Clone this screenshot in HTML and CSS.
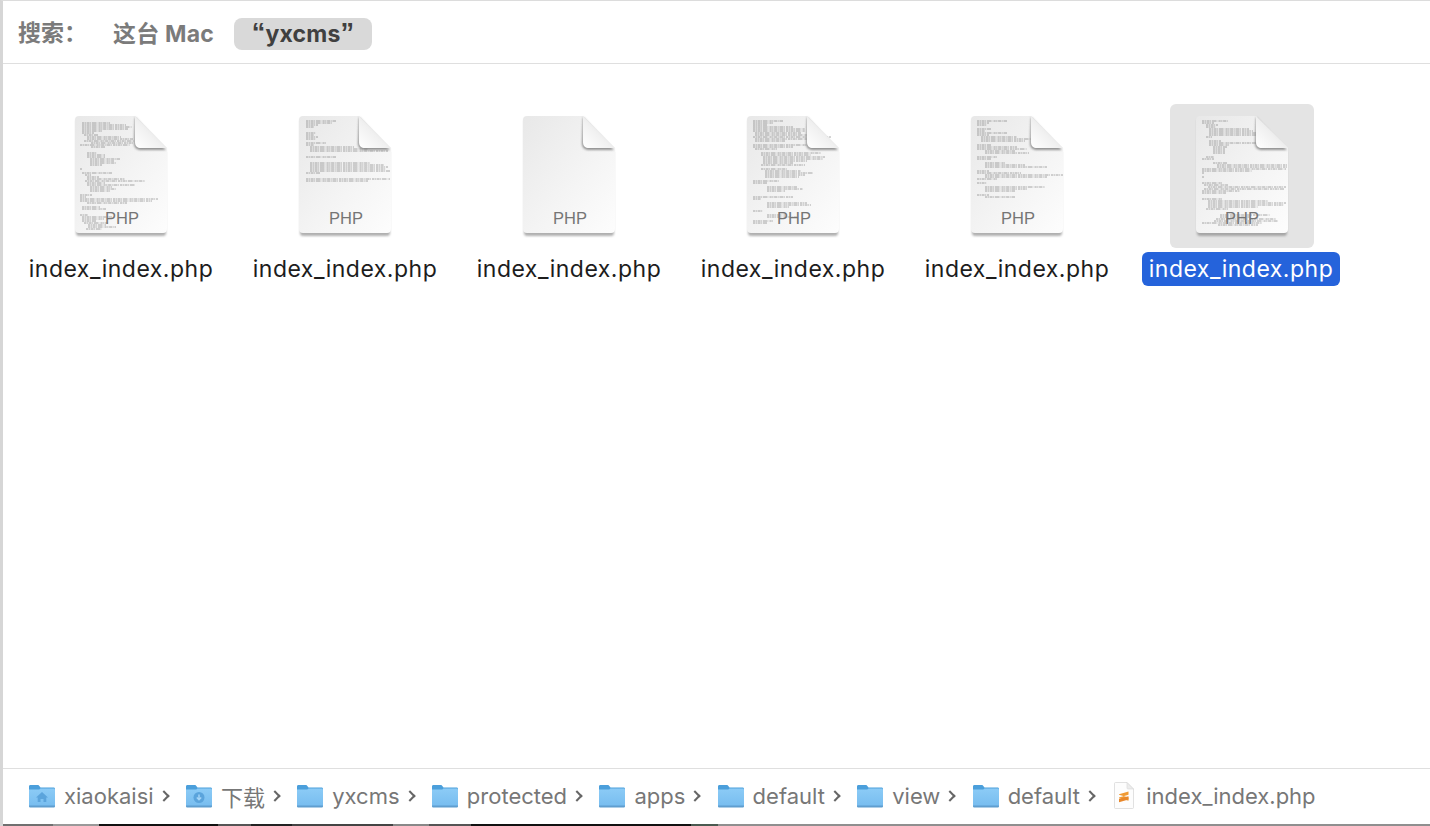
FILE: index.html
```html
<!DOCTYPE html>
<html lang="zh">
<head>
<meta charset="utf-8">
<title>搜索 yxcms</title>
<link rel="stylesheet" href="styles.css">
</head>
<body>
<svg class="defs" width="0" height="0" aria-hidden="true">
  <defs>
    <linearGradient id="paper" x1="0" y1="0" x2="1" y2="1">
      <stop offset="0" stop-color="#e8e8e8"/>
      <stop offset=".55" stop-color="#f4f4f4"/>
      <stop offset="1" stop-color="#fdfdfd"/>
    </linearGradient>
    <linearGradient id="fold" x1="0" y1="1" x2="1" y2="0">
      <stop offset="0" stop-color="#ffffff"/>
      <stop offset=".45" stop-color="#f0f0f0"/>
      <stop offset="1" stop-color="#c8c8c8"/>
    </linearGradient>
    <linearGradient id="blue" x1="0" y1="0" x2="0" y2="1">
      <stop offset="0" stop-color="#8ccbf6"/>
      <stop offset="1" stop-color="#76bcef"/>
    </linearGradient>
    <filter id="soft" x="-10%" y="-10%" width="120%" height="120%">
      <feGaussianBlur stdDeviation="1.100"/>
    </filter>
    <filter id="inkblur" x="-5%" y="-5%" width="110%" height="110%">
      <feGaussianBlur stdDeviation=".3"/>
    </filter>
    <symbol id="doc" viewBox="0 0 144 144">
      <g transform="translate(26 12)">
        <path class="doc-shadow" d="M4 3h55l32 33v81a3 3 0 0 1-3 3H4a3 3 0 0 1-3-3V6a3 3 0 0 1 3-3z"/>
        <path fill="url(#paper)" d="M4 0h56l32 32v81a4 4 0 0 1-4 4H4a4 4 0 0 1-4-4V4a4 4 0 0 1 4-4z"/>
      </g>
    </symbol>
    <symbol id="corner" viewBox="0 0 144 144">
      <g transform="translate(26 12)">
        <path class="fold-shadow" d="M60 1l31 33H66c-4 0-7-2-7-7z"/>
        <path fill="url(#fold)" d="M60 0l32 32H66c-4 0-6-2-6-6z"/>
      </g>
    </symbol>
    <symbol id="folder" viewBox="0 0 26 24">
      <path fill="#4b9fdb" d="M0 2.500C0 1.500.6 1 1.500 1h7c1 0 1.500.4 2 1.200L11.500 3.500H24.500c1 0 1.500.6 1.500 1.500v3H0z"/>
      <path fill="url(#blue)" d="M0 5.500h9.500c1 0 1.500-.5 2-1h13c1 0 1.500.6 1.500 1.500V21.500c0 1-.6 1.500-1.500 1.500h-23C.6 23 0 22.500 0 21.500z"/>
      <path fill="#5f9ecf" d="M0 21.500h26v.5c0 1-.6 1.500-1.500 1.500h-23C.6 23.500 0 23 0 22z"/>
    </symbol>
    <symbol id="scode" viewBox="0 0 20 27">
      <path fill="#fdfdfd" stroke="#d9d9d9" stroke-width=".8" d="M1.500.5H13L19.500 7V25.500a1 1 0 0 1-1 1H1.500a1 1 0 0 1-1-1V1.500a1 1 0 0 1 1-1z"/>
      <path fill="#ececec" stroke="#d9d9d9" stroke-width=".6" d="M13 .5V6a1 1 0 0 0 1 1h5.500z"/>
      <path fill="#f09a33" d="M5 12.200 14.500 9.500v3.300L5 15.500zM5 16l9.500 2.700v-3.300L5 12.700z"/>
      <path fill="#e8872a" d="M5 16.800 14.500 14.200v3.400L5 20.300z"/>
    </symbol>
  </defs>
</svg>

<div class="window">
  <header class="search">
    <span class="search-label">搜索：</span>
    <span class="scope">这台 Mac</span>
    <span class="scope scope-on"><span class="quote">“</span>yxcms<span class="quote">”</span></span>
  </header>

  <main class="files">
    <div class="file">
      <svg class="thumb" viewBox="0 0 144 144">
        <use href="#doc" width="144" height="144"/>
        <g transform="translate(26 12)">
          <path class="code" d="M7 7h28M7 9h44M7 11h50M7 13h46M7 15h20M7 17h12M9 19h14M12 21h34M12 23h46M9 25h50M16 27h42M5 29h50M16 31h14M12 37h10M12 39h18M12 41h18M15 43h30M15 45h24M15 47h26M15 49h12M5 53h2M7 57h30M10 59h6M12 61h12M12 63h38M10 65h60M12 67h18M12 69h48M15 71h22M15 73h26M15 75h20M5 79h12M5 81h6M5 83h78M5 85h72M12 87h40M7 91h18M7 93h24M5 99h8M7 101h30M7 103h22M7 105h14M9 107h24M13 109h18M13 111h28M11 113h16"/>
        </g>
        <use href="#corner" width="144" height="144"/>
        <text class="doc-ext" x="73" y="120">PHP</text>
      </svg>
      <span class="name">index_index.php</span>
    </div>
    <div class="file">
      <svg class="thumb" viewBox="0 0 144 144">
        <use href="#doc" width="144" height="144"/>
        <g transform="translate(26 12)">
          <path class="code" d="M7 5h30M7 7h26M7 9h12M7 11h8M7 17h10M7 19h8M7 21h12M7 23h10M7 27h20M7 29h8M11 31h44M11 33h58M11 35h78M7 41h30M11 47h60M11 49h74M11 51h78M11 53h76M11 55h80M7 57h14M7 63h84M7 65h62"/>
        </g>
        <use href="#corner" width="144" height="144"/>
        <text class="doc-ext" x="73" y="120">PHP</text>
      </svg>
      <span class="name">index_index.php</span>
    </div>
    <div class="file">
      <svg class="thumb" viewBox="0 0 144 144">
        <use href="#doc" width="144" height="144"/>
        <use href="#corner" width="144" height="144"/>
        <text class="doc-ext" x="73" y="120">PHP</text>
      </svg>
      <span class="name">index_index.php</span>
    </div>
    <div class="file">
      <svg class="thumb" viewBox="0 0 144 144">
        <use href="#doc" width="144" height="144"/>
        <g transform="translate(26 12)">
          <path class="code" d="M6 5h30M6 7h20M6 9h14M6 11h40M6 13h52M6 15h52M8 17h46M8 19h52M6 21h78M8 23h60M8 25h30M6 29h60M6 31h40M8 33h22M14 37h60M14 39h50M16 41h62M16 43h60M16 45h44M16 47h30M14 49h44M14 53h26M18 55h36M18 57h48M18 59h40M18 61h34M6 65h26M6 67h14M20 71h30M20 73h36M20 75h18M6 81h40M6 83h8M20 87h40M20 89h44M20 91h22M6 95h10M20 99h20M20 101h30M6 105h20M6 107h14"/>
        </g>
        <use href="#corner" width="144" height="144"/>
        <text class="doc-ext" x="73" y="120">PHP</text>
      </svg>
      <span class="name">index_index.php</span>
    </div>
    <div class="file">
      <svg class="thumb" viewBox="0 0 144 144">
        <use href="#doc" width="144" height="144"/>
        <g transform="translate(26 12)">
          <path class="code" d="M6 5h30M6 7h12M6 9h10M6 13h14M6 15h8M6 17h30M6 19h12M10 21h36M10 23h50M10 25h44M6 29h14M6 31h40M6 33h50M14 35h30M14 37h44M6 41h20M6 43h14M14 47h20M14 49h40M14 51h62M6 55h12M6 57h44M14 59h78M14 61h62M6 63h20M6 67h10M14 71h60M14 73h42M14 75h30M6 79h12M14 81h30"/>
        </g>
        <use href="#corner" width="144" height="144"/>
        <text class="doc-ext" x="73" y="120">PHP</text>
      </svg>
      <span class="name">index_index.php</span>
    </div>
    <div class="file file-on">
      <svg class="thumb" viewBox="0 0 144 144">
        <use href="#doc" width="144" height="144"/>
        <g transform="translate(26 12)">
          <path class="code" d="M6 5h26M6 7h12M10 9h12M10 11h10M13 13h40M13 15h44M13 17h48M13 19h50M10 21h6M13 25h12M13 27h50M13 29h20M17 31h14M17 33h12M17 35h12M17 37h12M10 41h8M6 43h12M17 47h14M21 49h70M21 51h70M6 53h84M6 55h50M6 57h2M6 61h2M6 67h20M8 69h24M12 71h78M8 73h80M6 75h38M6 77h24M6 83h20M12 85h60M12 87h78M12 89h76M12 91h50M10 93h22M24 99h50M24 101h30M20 103h60M18 105h64M6 107h60M22 109h40"/>
        </g>
        <use href="#corner" width="144" height="144"/>
        <text class="doc-ext" x="72" y="120">PHP</text>
      </svg>
      <span class="name">index_index.php</span>
    </div>
  </main>

  <footer class="path">
    <span class="crumb">
      <svg class="ico" viewBox="0 0 26 24"><use href="#folder" width="26" height="24"/><path class="glyph" d="M13 8l6 5.500h-1.700V18h-2.800v-3h-3v3H8.700v-4.500H7z"/></svg>
      <span>xiaokaisi</span>
    </span>
    <span class="sep"></span>
    <span class="crumb">
      <svg class="ico" viewBox="0 0 26 24"><use href="#folder" width="26" height="24"/><circle class="glyph" cx="13" cy="13.500" r="5.500"/><path class="glyph-cut" d="M13 10.500v5M10.800 13.500l2.200 2.200 2.200-2.200"/></svg>
      <span>下载</span>
    </span>
    <span class="sep"></span>
    <span class="crumb"><svg class="ico" viewBox="0 0 26 24"><use href="#folder" width="26" height="24"/></svg><span>yxcms</span></span>
    <span class="sep"></span>
    <span class="crumb"><svg class="ico" viewBox="0 0 26 24"><use href="#folder" width="26" height="24"/></svg><span>protected</span></span>
    <span class="sep"></span>
    <span class="crumb"><svg class="ico" viewBox="0 0 26 24"><use href="#folder" width="26" height="24"/></svg><span>apps</span></span>
    <span class="sep"></span>
    <span class="crumb"><svg class="ico" viewBox="0 0 26 24"><use href="#folder" width="26" height="24"/></svg><span>default</span></span>
    <span class="sep"></span>
    <span class="crumb"><svg class="ico" viewBox="0 0 26 24"><use href="#folder" width="26" height="24"/></svg><span>view</span></span>
    <span class="sep"></span>
    <span class="crumb"><svg class="ico" viewBox="0 0 26 24"><use href="#folder" width="26" height="24"/></svg><span>default</span></span>
    <span class="sep"></span>
    <span class="crumb crumb-file"><svg class="ico-file" viewBox="0 0 20 27"><use href="#scode" width="20" height="27"/></svg><span>index_index.php</span></span>
  </footer>
  <div class="desktop"></div>
</div>
</body>
</html>
```

FILE: styles.css
```css
* { box-sizing: border-box; }
html, body { margin: 0; height: 100%; background: #fff; overflow: hidden; }
body { font-family: Inter, "Noto Sans CJK SC", "Liberation Sans", sans-serif; }
.defs { display: block; height: 0; width: 0; }

.window {
  display: flex;
  flex-direction: column;
  height: 826px;
  border-left: 3px solid #d6d6d6;
  border-top: 1px solid #dcdcdc;
  background: #fff;
}

.search {
  display: flex;
  align-items: center;
  height: 63px;
  flex: none;
  padding: 4px 0 0 15px;
  border-bottom: 1px solid #dfdfdf;
  font-size: 23px;
  font-weight: 700;
  letter-spacing: .2px;
  color: #7b7b7b;
}
.search-label { width: 95px; margin-bottom: 6px; letter-spacing: 0; }
.scope { white-space: nowrap; margin-bottom: 5px; }
.scope-on {
  display: flex;
  align-items: center;
  justify-content: center;
  width: 138px;
  height: 32px;
  margin: 0 0 0 20px;
  padding-bottom: 1px;
  border-radius: 8px;
  background: #d9d9d9;
  color: #404040;
}
.quote { font-family: "Liberation Sans", Arial, sans-serif; font-size: 27px; line-height: 1; }

.files {
  flex: 1;
  display: grid;
  grid-template-columns: repeat(6, 224px);
  align-content: start;
  padding: 40px 0 0 6px;
}
.file {
  display: flex;
  flex-direction: column;
  align-items: center;
}
.thumb { display: block; width: 144px; height: 144px; border-radius: 6px; }
.file-on .thumb { background: #e4e4e4; margin-left: 2px; }
.name {
  margin-top: 4px;
  height: 34px;
  padding: 0 7px;
  border-radius: 6px;
  font-size: 23px;
  letter-spacing: .5px;
  line-height: 35px;
  color: #1d1d1d;
  white-space: nowrap;
}
.file-on .name { background: #2563db; color: #fff; }

.doc-shadow { fill: #7d7d7d; opacity: .6; filter: url(#soft); }
.fold-shadow { fill: #808080; opacity: .85; filter: url(#soft); }
.code {
  fill: none;
  stroke: #6c6c6c;
  stroke-width: .8;
  stroke-dasharray: 2.200 .5 1.200 .7 3 .6 1 .8 4 .5 .8 1.200;
  opacity: .72;
  filter: url(#inkblur);
}
.doc-ext {
  font-family: "Liberation Sans", Arial, sans-serif;
  font-size: 16.500px;
  fill: #757575;
  text-anchor: middle;
}

.path {
  display: flex;
  align-items: center;
  flex: none;
  height: 56px;
  padding: 0 0 2px 26px;
  border-top: 1px solid #dfdfdf;
  font-size: 22px;
  color: #777;
}
.crumb { display: flex; align-items: center; gap: 9px; white-space: nowrap; }
.crumb-file { gap: 12px; margin-left: 2px; }
.ico { display: block; width: 26px; height: 24px; }
.ico-file { display: block; width: 20px; height: 27px; }
.glyph { fill: #5ba4dc; }
.glyph-cut { fill: none; stroke: #a6d6f8; stroke-width: 1.400; }
.sep {
  flex: none;
  width: 8px;
  height: 8px;
  margin: 0 18.300px 0 6px;
  border-top: 2px solid #666;
  border-right: 2px solid #666;
  transform: rotate(45deg);
}

.desktop {
  flex: none;
  height: 2px;
  background: linear-gradient(90deg,
    #707070 0 50px, #999 50px 96px, #111 96px 215px, #555 215px 248px,
    #222 248px 289px, #444 289px 390px, #888 390px 426px, #555 426px 468px,
    #111 468px 688px, #4a5a50 688px 715px, #8f8f8f 715px 100%);
}
```
